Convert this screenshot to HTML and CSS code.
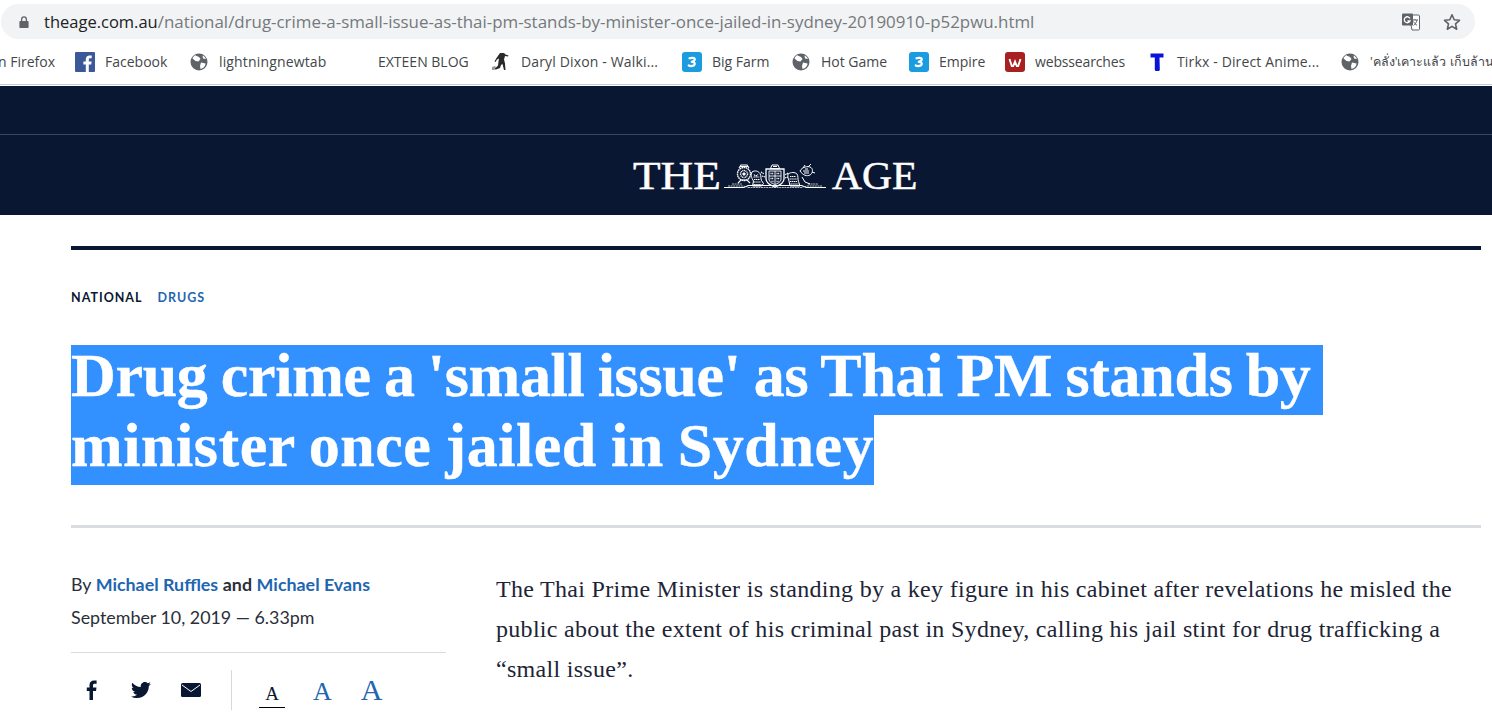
FILE: index.html
```html
<!DOCTYPE html>
<html lang="en">
<head>
<meta charset="utf-8">
<title>Drug crime a 'small issue'</title>
<link rel="stylesheet" href="styles.css">
</head>
<body>
<div class="chrome">
  <div class="omni">
    <svg class="lock" viewBox="0 0 12 14" width="12" height="14"><path d="M3 6V4.2a3 3 0 0 1 6 0V6h.6c.6 0 1 .4 1 1v5c0 .6-.4 1-1 1H2.400c-.6 0-1-.4-1-1V7c0-.6.4-1 1-1zm1.300 0h3.400V4.200a1.700 1.700 0 0 0-3.400 0z" fill="#5f6368"/></svg>
    <div class="url"><span class="host">theage.com.au</span>/national/drug-crime-a-small-issue-as-thai-pm-stands-by-minister-once-jailed-in-sydney-20190910-p52pwu.html</div>
    <svg class="translate" viewBox="0 0 20 20" width="20" height="20"><path d="M8 3h9.500c.5 0 1 .4 1 1v13c0 .6-.5 1-1 1H11z" fill="#fff" stroke="#5f6368" stroke-width="1"/><rect x="1" y="1.500" width="11" height="12" rx="1" fill="#5f6368"/><path d="M9 6.500A3 3 0 1 0 9 9H6.500" fill="none" stroke="#fff" stroke-width="1.300"/><path d="M11 8h6M14 7v1M16 8c-.5 2.500-2 4.500-3.500 5.500M12.500 9.500c.8 1.700 2 3 3.500 3.700" fill="none" stroke="#5f6368" stroke-width="1"/></svg>
    <svg class="star" viewBox="0 0 20 20" width="20" height="20"><path d="M10 2.800l2.200 5 5.300.5-4 3.600 1.200 5.300L10 14.400l-4.700 2.800 1.200-5.300-4-3.600 5.300-.5z" fill="none" stroke="#5f6368" stroke-width="1.600" stroke-linejoin="round"/></svg>
  </div>
  <div class="bookmarks">
    <div class="bm"><span class="first">n Firefox</span></div>
    <div class="bm">
      <svg viewBox="0 0 20 20" width="20" height="20"><rect width="20" height="20" rx="1" fill="#3b5998"/><path d="M13.800 20v-7.500h2.400l.4-3h-2.800V7.700c0-.9.300-1.400 1.400-1.400h1.500V3.600c-.3 0-1.200-.1-2.200-.1-2.200 0-3.700 1.300-3.700 3.800v2.200H8.400v3h2.400V20z" fill="#fff"/></svg>
      <span>Facebook</span>
    </div>
    <div class="bm bm-globe">
      <svg viewBox="0 0 18 18" width="18" height="18"><use href="#globe"/></svg>
      <span class="wide">lightningnewtab</span>
    </div>
    <div class="bm"><span>EXTEEN BLOG</span></div>
    <div class="bm">
      <svg viewBox="0 0 20 20" width="20" height="20"><path d="M9 1l4 0 1.500 1.500 3 1-.5 1-3-.5-1 3.500 1 4 .5 6.500-1.500 0-1.500-6-1.500 1-1 3-4 1.500-3-.5 3-1.500 2-2 .5-4 .5-3-2 1-1.500 2.500-1-.5 2-3.500z" fill="#2b2b2b"/><path d="M1 15l3-1 1 1-2 3-2 0z" fill="#9a9a9a"/></svg>
      <span class="wide">Daryl Dixon - Walki...</span>
    </div>
    <div class="bm">
      <svg viewBox="0 0 20 20" width="20" height="20"><use href="#three"/></svg>
      <span>Big Farm</span>
    </div>
    <div class="bm bm-globe">
      <svg viewBox="0 0 18 18" width="18" height="18"><use href="#globe"/></svg>
      <span>Hot Game</span>
    </div>
    <div class="bm">
      <svg viewBox="0 0 20 20" width="20" height="20"><use href="#three"/></svg>
      <span>Empire</span>
    </div>
    <div class="bm">
      <svg viewBox="0 0 20 20" width="20" height="20"><rect width="20" height="20" rx="3" fill="#a8201f"/><path d="M4.500 7l2.300 7h1.400L10 9.500l1.800 4.500h1.400l2.300-7" fill="none" stroke="#fff" stroke-width="1.900"/></svg>
      <span class="tight">webssearches</span>
    </div>
    <div class="bm">
      <svg viewBox="0 0 20 20" width="20" height="20"><path d="M3.500 1.500h13v4h-4l.3 12c0 1-.8 1.500-1.800 1.500H9.500c-1 0-1.700-.5-1.700-1.500V5.500H3.500z" fill="#0a14d8"/></svg>
      <span class="wide">Tirkx - Direct Anime...</span>
    </div>
    <div class="bm bm-globe">
      <svg viewBox="0 0 18 18" width="18" height="18"><use href="#globe"/></svg>
      <span class="thai">'คลั่ง'เคาะแล้ว เก็บล้าน</span>
    </div>
  </div>
</div>

<svg class="defs" width="0" height="0">
  <defs>
    <g id="globe"><circle cx="9" cy="9" r="8.500" fill="#5f6368"/><path d="M5.500 2.500L9 4l1.500 2-2 2.500-3-.5-3-2.500c.5-1.300 1.300-2.300 3-3.500zM11 9.500l4.500 1c.3 1-1 3.500-2.500 4.500l-2.500 1-.5-3zM12.500 2.500c1.500.7 2.500 1.700 3.500 3.500l-3-.5z" fill="#fff"/></g>
    <g id="three"><rect width="20" height="20" rx="3" fill="#1b9be0"/><path d="M7.500 6.300c1.500-.6 5-.8 5.300.7.200 1.300-1.300 2.300-3 2.900 2 0 3.200.8 2.900 2.300-.4 1.800-3.900 2.400-6 1.300" fill="none" stroke="#fff" stroke-width="2.200" stroke-linecap="round" stroke-linejoin="round"/></g>
  </defs>
</svg>

<header class="masthead">
  <div class="masthead-top"></div>
  <div class="masthead-main">
    <div class="logo">
      <span class="logo-the">THE</span>
      <svg class="crest" viewBox="0 0 102 25" width="102" height="25">
        <g fill="none" stroke="#fff" stroke-width=".7">
          <path d="M0 23.500h20l4-2h54l4 2h20" stroke-width="1"/>
          <path d="M4 22h14l6 1M98 22H84l-6 1M8 20h10M84 20h10M24 23.500h54" stroke-dasharray="2 .6"/>
          <circle cx="20" cy="10" r="6.500" stroke-width="1.400" stroke-dasharray="1.600 .5"/>
          <circle cx="20" cy="10" r="3.500" stroke-dasharray="1 .6" stroke-width="1.400"/>
          <circle cx="20" cy="10" r="1.300" fill="#fff"/>
          <path d="M15 4l2-3h6l2 3M14 19l3-3h6l3 3M16 2.500h8" stroke-width="1.100"/>
          <path d="M42 5h18v10c0 4-5 6.500-9 8-4-1.500-9-4-9-8z" stroke-width="1.300"/>
          <path d="M45 7h12v8c0 3-3 4.500-6 5.500-3-1-6-2.500-6-5.500zM51 7v13M45 12h12" stroke-width=".9"/>
          <path d="M46.500 9.500h3M52.500 9.500h3M46.500 14.500h3M52.500 14.500h3M47.500 17.500h2M52.500 17.500h2" stroke-width="1.500" stroke-dasharray="1 .4"/>
          <path d="M48 1h6l1.500 3.500h-9zM49 2.500h4" stroke-width="1"/>
          <path d="M28 8c3-2 6-1 8 1.500 1.500 2.500.5 5 1.500 7l2 3-2 2.500h-9l1-5c-2-3-3-6-1.500-9z" stroke-width="1"/>
          <path d="M30 10.500c1 1.500 3 1.500 4 0M29.500 13h6M30 15.500h6M29.500 18h7M29.500 20.500h8M37 8l3 2M38 12l3 1" stroke-dasharray="1.400 .5" stroke-width="1.100"/>
          <path d="M64 10c3-2 7-2 9 0 1.500 2 .5 5 1.500 7.500l1.500 4.500h-10l-1-5c-1-2.500-1.500-5-1-7z" stroke-width="1"/>
          <path d="M66 12.500h6M65.500 15h7.500M66 17.500h7.500M66.500 20h8M64 9l-3 2M64 13l-3 1" stroke-dasharray="1.400 .5" stroke-width="1.100"/>
          <path d="M76 7c2-4 8-5.500 11-3.500 2.500 2 1.500 6-1 7.500-3 1.500-7 .5-10-4zM79 4l2-3M84 3l3-3M88 8l3 1M78 13l3 5 5 2M79 7h6M81 5h3M80 9h5" stroke-width="1"/>
        </g>
      </svg>
      <span class="logo-age">AGE</span>
    </div>
  </div>
</header>

<main class="article">
  <div class="rule-top"></div>
  <div class="kicker"><span class="kicker-a">NATIONAL</span><span class="kicker-b">DRUGS</span></div>
  <h1 class="headline">
    <span class="hl hl-1">Drug crime a 'small issue' as Thai PM stands by</span>
    <span class="hl hl-2">minister once jailed in Sydney</span>
  </h1>
  <div class="rule-mid"></div>
  <div class="columns">
    <aside class="meta">
      <div class="byline">By <a class="author">Michael Ruffles</a> <b>and</b> <a class="author">Michael Evans</a></div>
      <div class="date">September 10, 2019 — 6.33pm</div>
      <div class="tools">
        <div class="share">
          <svg viewBox="0 0 12 20" width="12" height="20"><path d="M3.500 20v-9H.8V7.500h2.700V5c0-3 1.800-4.500 4.400-4.500 1.300 0 2.300.1 2.700.1v3.100H8.800C7.400 3.700 7 4.400 7 5.400v2.100h3.500L10 11H7v9z" fill="#0a1733"/></svg>
          <svg viewBox="0 0 20 16" width="20" height="16"><path d="M20 2c-.7.3-1.500.5-2.400.6.900-.5 1.500-1.300 1.800-2.300-.8.500-1.700.8-2.600 1A4.100 4.100 0 0 0 9.800 5C6.400 4.800 3.400 3.200 1.400.7.300 2.600.8 5 2.700 6.200c-.7 0-1.300-.2-1.900-.5 0 2 1.400 3.700 3.300 4.100-.6.200-1.200.2-1.800.1.500 1.600 2 2.800 3.800 2.800A8.200 8.200 0 0 1 0 14.400 11.600 11.600 0 0 0 6.300 16c7.500 0 11.800-6.400 11.500-12 .9-.5 1.600-1.200 2.200-2z" fill="#0a1733"/></svg>
          <svg viewBox="0 0 20 14" width="20" height="14"><rect width="20" height="14" rx="1.500" fill="#0a1733"/><path d="M1 2l9 6.500L19 2" fill="none" stroke="#fff" stroke-width="1"/></svg>
        </div>
        <div class="sizes">
          <span class="sz sz-s">A</span>
          <span class="sz sz-m">A</span>
          <span class="sz sz-l">A</span>
        </div>
      </div>
    </aside>
    <p class="lead">The Thai Prime Minister is standing by a key figure in his cabinet after revelations he misled the public about the extent of his criminal past in Sydney, calling his jail stint for drug trafficking a “small issue”.</p>
  </div>
</main>
</body>
</html>
```
FILE: styles.css
```css
* { box-sizing: border-box; }
html, body { margin: 0; padding: 0; }
body { width: 1492px; height: 719px; overflow: hidden; background: #fff; font-family: "Liberation Serif", serif; color: #0a1733; }
.defs { position: absolute; }

.chrome { height: 86px; padding-top: 4px; background: #fff; }
.omni { display: flex; align-items: center; height: 35px; margin: 0 17px 0 1px; background: #f1f3f4; border-radius: 18px; padding-left: 17px; font-family: "Open Sans", sans-serif; }
.lock { flex: none; }
.url { flex: 1; margin-left: 14px; font-size: 16.9px; color: #75797d; white-space: nowrap; }
.host { color: #202124; font-size: 16.5px; }
.translate { flex: none; margin-right: 21px; }
.star { flex: none; margin-right: 13px; }

.bookmarks { display: grid; grid-template-columns: 75px 115px 188px 113px 191px 110px 117px 96px 142px 194px 1fr; align-items: center; height: 46px; overflow: hidden; border-bottom: 1px solid #c8c9cb; font-family: "Open Sans", sans-serif; font-size: 14px; color: #44474a; white-space: nowrap; }
.bm { display: flex; align-items: center; gap: 10px; min-width: 0; }
.bm svg { flex: none; }
.bm-globe { gap: 11px; }
.first { margin-left: -2px; }
.wide { letter-spacing: .15px; }
.tight { letter-spacing: -.15px; }
.thai { font-size: 12.5px; }

.masthead { background: #0a1733; height: 129px; }
.masthead-top { height: 49px; border-bottom: 1px solid #3a4560; }
.masthead-main { display: flex; padding: 21px 0 0 633px; }
.logo { display: flex; align-items: flex-end; color: #fff; font-size: 40px; line-height: 40px; font-family: "Liberation Serif", serif; -webkit-text-stroke: .5px #fff; }
.logo-the { width: 91px; transform: scaleX(1.13); transform-origin: left center; }
.logo-age { margin-left: 6px; transform: scaleX(1.04); transform-origin: left center; }
.crest { margin-bottom: 7px; flex: none; }

.article { padding: 31px 11px 0 71px; }
.rule-top { height: 4px; background: #0a1733; }
.kicker { margin-top: 40px; font-family: Lato, sans-serif; font-weight: 700; font-size: 12.5px; line-height: 16px; letter-spacing: 1px; display: flex; gap: 15px; }
.kicker-b { color: #1f66b0; }
.headline { margin: 39px 0 0; font-size: 62px; font-weight: 700; font-family: "Liberation Serif", serif; word-spacing: -2px; -webkit-text-stroke: .4px #fff; }
.hl { display: block; width: fit-content; height: 70px; line-height: 60px; background: #3390ff; color: #fff; white-space: nowrap; }
.hl-1 { padding-right: 12px; letter-spacing: -.3px; }
.hl-2 { letter-spacing: .55px; }
.rule-mid { height: 3px; margin-top: 40px; background: #d9dce1; }
.columns { display: flex; margin-top: 43px; }
.meta { width: 375px; flex: none; font-family: Lato, sans-serif; font-size: 17.85px; color: #2a2f3a; }
.byline { line-height: 26px; }
.byline b { font-weight: 700; }
.author { color: #1f66b0; font-weight: 700; }
.date { line-height: 26px; margin-top: 7px; }
.tools { display: flex; margin-top: 22px; border-top: 1px solid #dcdcdc; padding-top: 17px; height: 66px; }
.share { display: flex; align-items: center; width: 161px; padding: 10px 0 10px 15px; border-right: 1px solid #d8d8d8; height: 40px; }
.share svg { flex: none; margin-right: 33px; }
.share svg:nth-child(2) { margin-right: 30px; }
.sizes { display: flex; gap: 28px; align-items: baseline; padding: 5px 0 0 27px; height: 46px; font-family: "Liberation Serif", serif; color: #1f66b0; }
.sz { line-height: 30px; text-align: center; }
.sz-s { color: #0a1733; font-size: 19px; line-height: 27px; border-bottom: 1px solid #000; width: 26px; }
.sz-m { font-size: 26px; }
.sz-l { font-size: 30px; margin-left: 1px; }
.lead { margin: -2px 0 0 50px; font-size: 24px; letter-spacing: .3px; line-height: 40px; color: #1d2436; width: 975px; }
```
